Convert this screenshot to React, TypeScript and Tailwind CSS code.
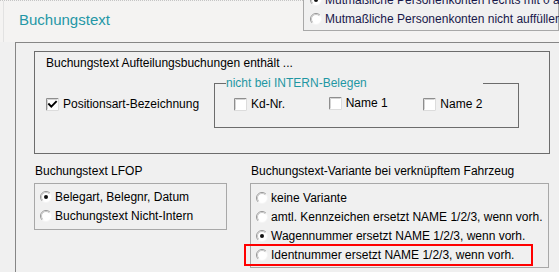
import React from "react";

const Radio = ({ checked = false }: { checked?: boolean }) => (
  <svg width="12" height="12" viewBox="0 0 12 12" className="shrink-0">
    <circle cx="6" cy="6" r="5.5" fill="#ffffff" />
    <path d="M9.9 2.1 A5.5 5.5 0 0 0 2.1 9.9" stroke="#969696" strokeWidth="1" fill="none" />
    <path d="M9.9 2.1 A5.5 5.5 0 0 1 2.1 9.9" stroke="#f4f4f4" strokeWidth="1" fill="none" />
    <path d="M9.2 2.8 A4.5 4.5 0 0 0 2.8 9.2" stroke="#c8c8c8" strokeWidth="1" fill="none" />
    {checked && <circle cx="6" cy="6" r="2" fill="#111111" />}
  </svg>
);

const Check = ({ checked = false }: { checked?: boolean }) => (
  <svg width="13" height="13" viewBox="0 0 13 13" className="shrink-0">
    <rect x="0" y="0" width="13" height="13" fill="#ffffff" />
    <path d="M0.5 12.5 V0.5 H12.5" stroke="#8e8e8e" strokeWidth="1" fill="none" />
    <path d="M1.5 11.5 V1.5 H11.5" stroke="#d4d4d4" strokeWidth="1" fill="none" />
    <path d="M12.5 0.5 V12.5 H0.5" stroke="#dcdcdc" strokeWidth="1" fill="none" />
    {checked && (
      <path d="M3 6.2 L5.3 8.6 L10 3.8" stroke="#000000" strokeWidth="1.9" fill="none" strokeLinecap="square" />
    )}
  </svg>
);

const RadioRow = ({ label, checked = false, textClass = "" }: { label: string; checked?: boolean; textClass?: string }) => (
  <div className="flex h-[19px] items-center gap-[3px]">
    <Radio checked={checked} />
    <span className={"whitespace-nowrap leading-[14px] " + textClass}>{label}</span>
  </div>
);

const CheckItem = ({ label, checked = false, extra = "" }: { label: string; checked?: boolean; extra?: string }) => (
  <div className={"flex items-center gap-[4px] " + extra}>
    <Check checked={checked} />
    <span className="whitespace-nowrap leading-[14px]">{label}</span>
  </div>
);

export default function App() {
  return (
    <div className="relative flex h-[272px] w-[559px] flex-col overflow-hidden bg-[#f0f0f0] font-['Liberation_Sans',Arial,sans-serif] text-[12px] text-black">
      {/* header */}
      <div className="flex h-[42px] shrink-0 border-t border-dotted border-[#c4c4c4] bg-[#f4f3f2]">
        <div className="w-[4px] shrink-0 border-r border-[#e2e2e2]" />
        <h1 className="pl-[15px] pt-[10px] text-[15px] leading-[18px] text-[#2497a6]">Buchungstext</h1>
        <div className="ml-auto mt-[-12px] w-[256px] shrink-0 self-start border border-[#a8a8a8] bg-[#f0f0f0] pb-[2px] pl-[6px]">
          <RadioRow label="Mutmaßliche Personenkonten rechts mit 0 auffüllen" checked textClass="text-[#18184a]" />
          <RadioRow label="Mutmaßliche Personenkonten nicht auffüllen" textClass="text-[#18184a]" />
        </div>
      </div>

      {/* outer box */}
      <div className="ml-[15px] flex-1 border-l border-t border-[#868686] pl-[18px] pt-[8px]">
        {/* inner box */}
        <div className="h-[103px] w-[516px] border border-[#6c6c6c] pt-[4px]">
          <div className="pl-[11px] leading-[14px]">Buchungstext Aufteilungsbuchungen enthält ...</div>
          <div className="mt-[13px] flex items-start">
            <div className="w-[179px] shrink-0 pl-[11px] pt-[14px]">
              <CheckItem label="Positionsart-Bezeichnung" checked />
            </div>
            <div className="relative h-[45px] w-[305px] border border-[#6c6c6c]">
              <div className="absolute left-[11px] top-[-8px] w-[257px] bg-[#f0f0f0] leading-[14px] text-[#1f97a3]">
                nicht bei INTERN-Belegen
              </div>
              <div className="flex items-start pl-[19px] pt-[13px]">
                <div className="w-[100px]">
                  <CheckItem label="Kd-Nr." />
                </div>
                <div className="mt-[-1px] w-[100px]">
                  <CheckItem label="Name 1" />
                </div>
                <div className="w-[100px]">
                  <CheckItem label="Name 2" />
                </div>
              </div>
            </div>
          </div>
        </div>

        {/* lower section */}
        <div className="mt-[10px] flex items-start">
          <div className="w-[216px] shrink-0">
            <div className="pl-[1px] leading-[14px]">Buchungstext LFOP</div>
            <div className="mt-[5px] h-[47px] w-[193px] border border-[#a8a8a8] pl-[5px] pt-[3px]">
              <RadioRow label="Belegart, Belegnr, Datum" checked />
              <RadioRow label="Buchungstext Nicht-Intern" />
            </div>
          </div>
          <div className="shrink-0">
            <div className="pl-[1px] leading-[14px]">Buchungstext-Variante bei verknüpftem Fahrzeug</div>
            <div className="relative mt-[5px] h-[85px] w-[299px] border border-[#a8a8a8] pl-[5px] pt-[4px]">
              <RadioRow label="keine Variante" />
              <RadioRow label="amtl. Kennzeichen ersetzt NAME 1/2/3, wenn vorh." />
              <RadioRow label="Wagennummer ersetzt NAME 1/2/3, wenn vorh." checked />
              <RadioRow label="Identnummer ersetzt NAME 1/2/3, wenn vorh." />
              <div className="absolute left-[-7px] top-[60px] h-[22px] w-[289px] border-2 border-[#ff0000]" />
            </div>
          </div>
        </div>
      </div>
    </div>
  );
}
